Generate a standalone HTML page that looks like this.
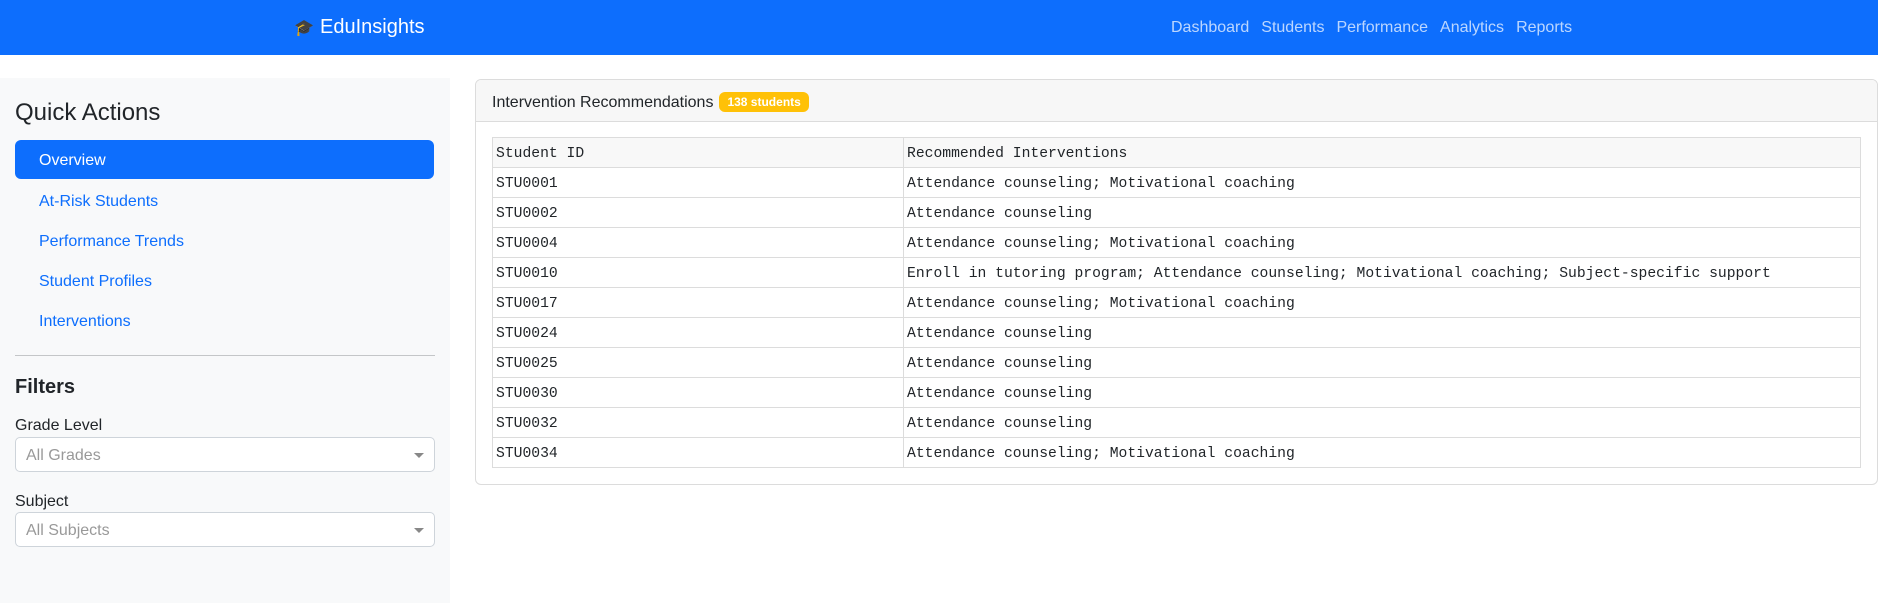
<!DOCTYPE html>
<html><head><meta charset="utf-8"><style>
*{box-sizing:border-box;margin:0;padding:0}
body{width:1884px;height:603px;overflow:hidden;background:#fff;font-family:"Liberation Sans",sans-serif;color:#212529;position:relative}
.nav{position:absolute;left:0;top:0;width:1878px;height:55px;background:#0d6efd}
.brand{position:absolute;left:294px;top:16px;color:#fff;font-size:20px}
.brand .ic{display:inline-block;width:18px;margin-right:8px;font-size:16px}
.links{position:absolute;left:1171px;top:19px;font-size:16px;color:rgba(255,255,255,.72)}
.links span{margin-right:12px}
.side{position:absolute;left:0;top:78px;width:450px;height:525px;background:#f8f9fa}
.side h4{position:absolute;left:15px;top:21px;font-size:24px;font-weight:500}
.btn{position:absolute;left:15px;top:62px;width:419px;height:39px;background:#0d6efd;border-radius:6px;color:#fff;font-size:16px;padding:12px 0 0 24px}
.lk{position:absolute;left:39px;font-size:16px;color:#0d6efd}
.hr{position:absolute;left:15px;top:277px;width:420px;height:1px;background:#c4c6c8}
.side h5{position:absolute;left:15px;top:298px;font-size:20px;font-weight:bold}
.lab{position:absolute;left:15px;font-size:16px}
.sel{position:absolute;left:15px;width:420px;height:35px;background:#fff;border:1px solid #ced4da;border-radius:5px;color:#999;font-size:16px;padding:9px 0 0 10px}
.sel:after{content:"";position:absolute;right:10px;top:15px;border:5px solid transparent;border-top:5px solid #888}
.card{position:absolute;left:475px;top:79px;width:1403px;height:406px;border:1px solid #dcdcdc;border-radius:6px;overflow:hidden}
.ch{height:42px;background:#f7f7f7;border-bottom:1px solid #dcdcdc;padding:12px 0 0 16px;font-size:16px}
.badge{display:inline-block;background:#ffc107;color:#fff;font-weight:bold;font-size:12px;border-radius:6px;padding:3px 8px;margin-left:6px;vertical-align:1px}
table{position:absolute;left:16px;top:57px;width:1369px;border-collapse:collapse;font-family:"Liberation Mono",monospace;font-size:14.7px}
td{border:1px solid #dcdcdc;height:30px;padding:3px 3px 0;vertical-align:middle}
tr:first-child td{background:#f8f8f8}
td:first-child{width:411px}
</style></head><body>
<div class="nav"><div class="brand"><span class="ic">🎓</span>EduInsights</div>
<div class="links"><span>Dashboard</span><span>Students</span><span>Performance</span><span>Analytics</span><span>Reports</span></div></div>
<div class="side"><h4>Quick Actions</h4><div class="btn">Overview</div>
<div class="lk" style="top:115px">At-Risk Students</div>
<div class="lk" style="top:155px">Performance Trends</div>
<div class="lk" style="top:195px">Student Profiles</div>
<div class="lk" style="top:235px">Interventions</div>
<div class="hr"></div><h5>Filters</h5>
<div class="lab" style="top:339px">Grade Level</div><div class="sel" style="top:359px">All Grades</div>
<div class="lab" style="top:415px">Subject</div><div class="sel" style="top:434px">All Subjects</div></div>
<div class="card"><div class="ch">Intervention Recommendations<span class="badge">138 students</span></div>
<table>
<tr><td>Student ID</td><td>Recommended Interventions</td></tr>
<tr><td>STU0001</td><td>Attendance counseling; Motivational coaching</td></tr>
<tr><td>STU0002</td><td>Attendance counseling</td></tr>
<tr><td>STU0004</td><td>Attendance counseling; Motivational coaching</td></tr>
<tr><td>STU0010</td><td>Enroll in tutoring program; Attendance counseling; Motivational coaching; Subject-specific support</td></tr>
<tr><td>STU0017</td><td>Attendance counseling; Motivational coaching</td></tr>
<tr><td>STU0024</td><td>Attendance counseling</td></tr>
<tr><td>STU0025</td><td>Attendance counseling</td></tr>
<tr><td>STU0030</td><td>Attendance counseling</td></tr>
<tr><td>STU0032</td><td>Attendance counseling</td></tr>
<tr><td>STU0034</td><td>Attendance counseling; Motivational coaching</td></tr>
</table></div>
</body></html>
